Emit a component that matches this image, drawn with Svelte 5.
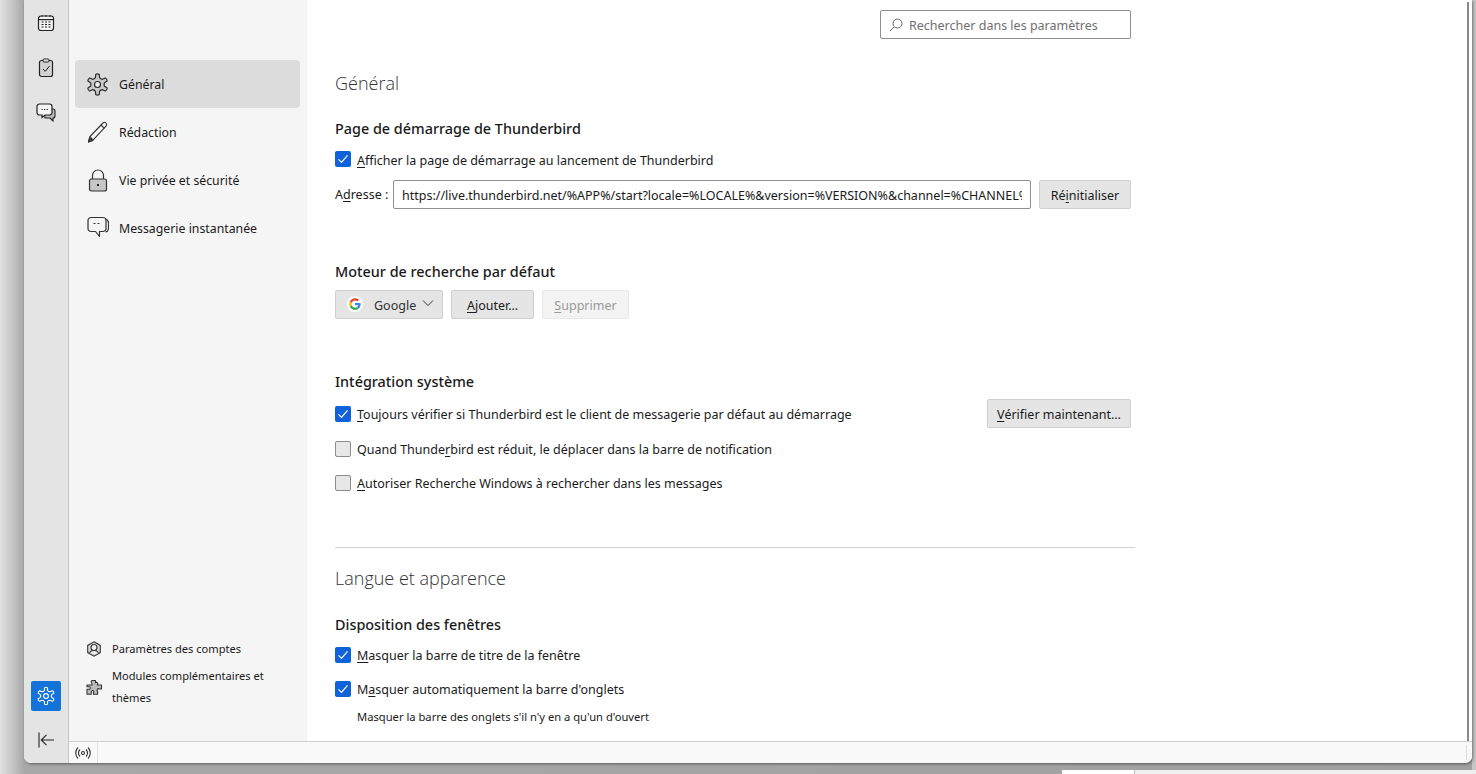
<script>
  const nav = [
    { label: 'Général', icon: 'gear', active: true },
    { label: 'Rédaction', icon: 'pen' },
    { label: 'Vie privée et sécurité', icon: 'lock' },
    { label: 'Messagerie instantanée', icon: 'chat' }
  ];

  // Six-lobed settings gear, as a smooth outline around the given centre.
  function gear(c, outer, inner, lobes = 6) {
    const pts = [];
    const step = (Math.PI * 2) / lobes;
    for (let i = 0; i < lobes; i++) {
      const a = -Math.PI / 2 + i * step;
      const w = step * 0.2;
      const p = (r, t) => `${(c + r * Math.cos(t)).toFixed(2)} ${(c + r * Math.sin(t)).toFixed(2)}`;
      pts.push(`${i === 0 ? 'M' : 'L'}${p(inner, a - w * 1.35)}`);
      pts.push(`L${p(outer, a - w * 0.85)}`);
      pts.push(`Q${p(outer + 1, a)} ${p(outer, a + w * 0.85)}`);
      pts.push(`L${p(inner, a + w * 1.35)}`);
      pts.push(`Q${p(inner - 1, a + step / 2)} ${p(inner, a + step - w * 1.35)}`);
    }
    return pts.join(' ') + 'Z';
  }
</script>

<div class="screen">
  <div class="window">
    <aside class="rail">
      <div class="rail-top">
        <span class="rail-btn">
          <svg viewBox="0 0 18 18" width="18" height="18"><rect x="1.500" y="2" width="15" height="14.500" rx="2.500" fill="#f4f4f4" stroke="#222" stroke-width="1.200"/><path d="M2 5.600h14" stroke="#222" stroke-width="1.200"/><path d="M5 1v2M9 1v2M13 1v2" stroke="#222"/><path d="M4.500 8h2M8 8h2M11.500 8h2M4.500 10.500h2M8 10.500h2M11.500 10.500h2M4.500 13h2M8 13h2M11.500 13h2" stroke="#222" stroke-width="1.200"/></svg>
        </span>
        <span class="rail-btn">
          <svg viewBox="0 0 18 20" width="18" height="20"><rect x="2.500" y="2.500" width="13" height="16" rx="2" fill="#d2d2d2" stroke="#222" stroke-width="1.200"/><rect x="6" y="1" width="6" height="3" rx="1" fill="#e8e8e8" stroke="#222"/><path d="M6 11l2.200 2.400L12.500 8" fill="none" stroke="#222"/></svg>
        </span>
        <span class="rail-btn">
          <svg viewBox="0 0 20 20" width="20" height="20"><path d="M8 7h9a2 2 0 0 1 2 2v5a2 2 0 0 1-2 2v3l-3-3H9z" fill="#bdbdbd" stroke="#222" stroke-width="1.100"/><path d="M3.500 2h10A2.500 2.500 0 0 1 16 4.500v6a2.500 2.500 0 0 1-2.500 2.500H9l-3 2.500V13H3.500A2.500 2.500 0 0 1 1 10.500v-6A2.500 2.500 0 0 1 3.500 2z" fill="#f6f6f6" stroke="#222" stroke-width="1.200"/><path d="M5.500 7.500h1.200M8 7.500h1.200M10.500 7.500h1.200" stroke="#222"/></svg>
        </span>
      </div>
      <div class="rail-bottom">
        <span class="settings-btn">
          <svg viewBox="0 0 20 20" width="20" height="20" fill="none" stroke="#fff" stroke-width="1.100" stroke-linejoin="round"><path d={gear(10, 8.300, 5.800)}/><circle cx="10" cy="10" r="2.400"/></svg>
        </span>
        <span class="collapse-btn">
          <svg viewBox="0 0 18 18" width="18" height="18" fill="none" stroke="#222" stroke-width="1.100"><path d="M2 1.500v15M17 9H4.500M9.500 3.800L4.300 9l5.200 5.200"/></svg>
        </span>
      </div>
    </aside>

    <div class="column">
      <div class="top">
        <nav class="side">
          <ul class="cats">
            {#each nav as item}
              <li class="cat" class:active={item.active}>
                <span class="cat-icon">
                  {#if item.icon === 'gear'}
                    <svg viewBox="0 0 24 24" width="24" height="24" stroke="#2b2b2b" stroke-width="1.200" stroke-linejoin="round"><path d={gear(12.500, 10.200, 7.200)} fill="#c9c9c9"/><circle cx="12.500" cy="12.500" r="3" fill="#efefef"/></svg>
                  {:else if item.icon === 'pen'}
                    <svg viewBox="0 0 24 24" width="24" height="24" stroke="#333" stroke-width="1.100" stroke-linejoin="round"><path d="M3.500 22l1.500-5.500L18 3a2 2 0 0 1 3 0 2.200 2.200 0 0 1 0 3L8 20.200z" fill="#f5f5f5"/><path d="M3.500 22l1.100-4.200L7.800 20.600z" fill="#444"/><path d="M16 5l3.300 3.300" fill="none"/><path d="M5 16.500l3 3.700" fill="none"/></svg>
                  {:else if item.icon === 'lock'}
                    <svg viewBox="0 0 24 24" width="24" height="24" stroke="#333" stroke-width="1.200"><path d="M7.500 11V7.500a5.500 5.500 0 0 1 11 0V11" fill="none"/><rect x="4.500" y="11" width="17" height="12" rx="2" fill="#c6c6c6"/><rect x="12" y="16" width="2" height="2" fill="#222" stroke="none"/></svg>
                  {:else}
                    <svg viewBox="0 0 24 24" width="24" height="24" stroke="#333" stroke-width="1.200" stroke-linejoin="round"><path d="M20.500 3c2 .5 3 2 3 4v5c0 2.200-1.200 3.700-3 4" fill="none"/><path d="M6 1.500h12a3 3 0 0 1 3 3v8a3 3 0 0 1-3 3h-3.500v5l-4-5H6a3 3 0 0 1-3-3v-8a3 3 0 0 1 3-3z" fill="#f5f5f5"/><path d="M8.500 7.500h2M12.500 7.500h2" stroke-width="1"/></svg>
                  {/if}
                </span>
                <span>{item.label}</span>
              </li>
            {/each}
          </ul>
          <ul class="links">
            <li class="link">
              <span class="link-icon">
                <svg viewBox="0 0 16 16" width="16" height="16" fill="none" stroke="#333" stroke-width="1.100"><path d="M8 .8l6.300 3.600v7.200L8 15.200l-6.300-3.600V4.400z" fill="#d8d8d8"/><circle cx="8" cy="6.500" r="3" fill="#f4f4f4"/><path d="M3.500 12.500c.5-2.500 2.500-3 4.500-3s4 .5 4.500 3" fill="#f4f4f4"/></svg>
              </span>
              <span>Paramètres des comptes</span>
            </li>
            <li class="link two">
              <span class="link-icon">
                <svg viewBox="0 0 17 17" width="17" height="17" stroke="#333" stroke-width="1.100" stroke-linejoin="round"><path d="M6 1.500h3.500v2.200c1.500-1 3 .3 1.800 2.300h4.200v4h-2.200c-1.500-1-3.200 1-1.700 2.500v2.800H7.500v-2c1-2-2-2.800-2.300 0v2H1v-5h1.700c1.800.5 2.500-2.500.2-2.600H1V6h5V4.500C4.800 3 5 2 6 1.500z" fill="#bdbdbd"/></svg>
              </span>
              <span>Modules complémentaires et thèmes</span>
            </li>
          </ul>
        </nav>

        <main class="main">
          <div class="content">
            <div class="search-row">
              <div class="search">
                <svg viewBox="0 0 14 14" width="14" height="14" fill="none" stroke="#666" stroke-width="1"><circle cx="8.500" cy="5.500" r="4.500"/><path d="M5.200 8.800L1 13"/></svg>
                <span class="search-text">Rechercher dans les paramètres</span>
              </div>
            </div>

            <h1 class="h1-general">Général</h1>

            <section class="sec-start">
              <h2>Page de démarrage de Thunderbird</h2>
              <label class="check on"><span class="box"><svg viewBox="0 0 16 16" width="16" height="16"><path d="M3.500 8.300l3 3 6-7" fill="none" stroke="#fff" stroke-width="1.200"/></svg></span><span class="lower"><u>A</u>fficher la page de démarrage au lancement de Thunderbird</span></label>
              <div class="addr">
                <span>A<u>d</u>resse :</span>
                <div class="input"><span class="input-text">https://live.thunderbird.net/%APP%/start?locale=%LOCALE%&amp;version=%VERSION%&amp;channel=%CHANNEL%</span></div>
                <button class="btn reset">Ré<u>i</u>nitialiser</button>
              </div>
            </section>

            <section class="sec-engine">
              <h2>Moteur de recherche par défaut</h2>
              <div class="btn-row">
                <button class="btn select">
                  <span class="g">
                    <svg viewBox="0 0 48 48" width="16" height="16"><circle cx="24" cy="24" r="24" fill="#fff"/><g transform="translate(6.500 6.500) scale(.73)"><path fill="#EA4335" d="M24 9.500c3.500 0 6.700 1.300 9.200 3.500l6.900-6.900C35.900 2.400 30.300 0 24 0 14.600 0 6.500 5.400 2.600 13.200l8 6.200C12.500 13.700 17.800 9.500 24 9.500z"/><path fill="#4285F4" d="M47 24.500c0-1.600-.1-3.100-.4-4.500H24v9h12.900c-.6 3-2.200 5.500-4.700 7.200l7.700 6C44.400 38 47 31.800 47 24.500z"/><path fill="#FBBC05" d="M10.600 28.600c-.5-1.400-.8-3-.8-4.600s.3-3.200.8-4.600l-8-6.200C.9 16.500 0 20.100 0 24s.9 7.500 2.600 10.800z"/><path fill="#34A853" d="M24 48c6.500 0 11.900-2.100 15.900-5.800l-7.700-6c-2.200 1.400-4.900 2.300-8.200 2.300-6.200 0-11.500-4.200-13.400-9.900l-8 6.200C6.500 42.600 14.600 48 24 48z"/></g></svg>
                  </span>
                  <span class="g-label">Google</span>
                  <svg class="chev" viewBox="0 0 12 8" width="12" height="8" fill="none" stroke="#333" stroke-width="1"><path d="M1 1.500l5 5 5-5"/></svg>
                </button>
                <button class="btn add"><u>A</u>jouter…</button>
                <button class="btn del"><u>S</u>upprimer</button>
              </div>
            </section>

            <section class="sec-system">
              <h2>Intégration système</h2>
              <div class="row-between">
                <label class="check on"><span class="box"><svg viewBox="0 0 16 16" width="16" height="16"><path d="M3.500 8.300l3 3 6-7" fill="none" stroke="#fff" stroke-width="1.200"/></svg></span><span class="lower"><u>T</u>oujours vérifier si Thunderbird est le client de messagerie par défaut au démarrage</span></label>
                <button class="btn verify"><u>V</u>érifier maintenant…</button>
              </div>
              <label class="check q"><span class="box"></span><span>Quand Thunde<u>r</u>bird est réduit, le déplacer dans la barre de notification</span></label>
              <label class="check s"><span class="box"></span><span><u>A</u>utoriser Recherche Windows à rechercher dans les messages</span></label>
            </section>

            <hr />

            <h1 class="h1-lang">Langue et apparence</h1>

            <section class="sec-layout">
              <h2>Disposition des fenêtres</h2>
              <label class="check on"><span class="box"><svg viewBox="0 0 16 16" width="16" height="16"><path d="M3.500 8.300l3 3 6-7" fill="none" stroke="#fff" stroke-width="1.200"/></svg></span><span><u>M</u>asquer la barre de titre de la fenêtre</span></label>
              <label class="check on t2"><span class="box"><svg viewBox="0 0 16 16" width="16" height="16"><path d="M3.500 8.300l3 3 6-7" fill="none" stroke="#fff" stroke-width="1.200"/></svg></span><span>M<u>a</u>squer automatiquement la barre d'onglets</span></label>
              <p class="note">Masquer la barre des onglets s'il n'y en a qu'un d'ouvert</p>
            </section>
          </div>
          <div class="scrollbar"></div>
        </main>
      </div>
      <footer class="status">
        <span class="signal">
          <svg viewBox="0 0 16 14" width="16" height="14" fill="none" stroke="#333" stroke-width="1.100"><circle cx="8" cy="7" r="1.500"/><path d="M5 3.500c-2 2-2 5 0 7M11 3.500c2 2 2 5 0 7M3 1.500c-3 3-3 8 0 11M13 1.500c3 3 3 8 0 11"/></svg>
        </span>
        <span class="status-fill"></span>
        <span class="grip"></span>
      </footer>
    </div>
  </div>
  <div class="under"><span class="under-white"></span><span class="under-gray"></span></div>
</div>

<style>
  :global(body) { margin: 0; background: #9c9c9c; overflow: hidden; }
  .screen {
    position: relative;
    width: 1476px;
    height: 774px;
    overflow: hidden;
    background: linear-gradient(90deg, #e0e0e0 0, #c6c6c6 12px, #a8a8a8 24px, #a0a0a0 1472px, #c6c6c6 1472px);
    font-family: "Noto Sans", "Open Sans", sans-serif;
    font-size: 12.500px;
    color: #1a1a1a;
  }
  .window {
    position: absolute;
    left: 24px;
    top: 0;
    width: 1448px;
    height: 763px;
    display: flex;
    background: #fff;
    border-radius: 0 0 7px 7px;
    overflow: hidden;
    box-shadow: 1px 1px 3px rgba(0,0,0,.45);
  }
  .column { flex: 1; min-width: 0; display: flex; flex-direction: column; }
  .top { flex: 1; display: flex; min-height: 0; }

  .rail {
    width: 45px;
    box-sizing: border-box;
    flex: none;
    background: #e4e4e4;
    border-right: 1px solid #c6c6c6;
    display: flex;
    flex-direction: column;
    justify-content: space-between;
    align-items: center;
  }
  .rail-top { display: flex; flex-direction: column; align-items: center; padding-top: 13px; }
  .rail-btn { display: flex; height: 20px; align-items: center; justify-content: center; margin-bottom: 24.500px; }
  .rail-bottom { display: flex; flex-direction: column; align-items: center; }
  .settings-btn {
    width: 30px; height: 30px; background: #1373d9; border-radius: 2px;
    display: flex; align-items: center; justify-content: center;
  }
  .collapse-btn { display: flex; height: 30px; margin-top: 14px; margin-bottom: 8px; align-items: center; }

  .side {
    width: 238px;
    flex: none;
    background: #f5f5f5;
    display: flex;
    flex-direction: column;
    justify-content: space-between;
    font-size: 12.300px;
  }
  .cats { list-style: none; margin: 60px 0 0; padding: 0 7px 0 6px; }
  .cat {
    height: 48px;
    display: flex;
    align-items: center;
    gap: 10px;
    padding-left: 10px;
    border-radius: 4px;
    color: #1a1a1a;
  }
  .cat-icon { width: 24px; height: 24px; display: flex; }
  .cat.active { background: #dcdcdc; }
  .links { list-style: none; margin: 0 0 32px; padding: 0 38px 0 17px; font-size: 11.100px; }
  .link { display: flex; align-items: center; gap: 9px; min-height: 22px; line-height: 22px; }
  .link.two { margin-top: 5px; }
  .link-icon { width: 17px; flex: none; display: flex; }

  .main { flex: 1; min-width: 0; position: relative; overflow: hidden; background: #fff; }
  .content { width: 800px; margin-left: 28px; position: relative; }
  .search-row { padding-top: 10px; width: 796px; display: flex; justify-content: flex-end; }
  .search {
    width: 251px; height: 29px; box-sizing: border-box;
    border: 1px solid #8f8f8f; border-radius: 2px;
    display: flex; align-items: center; gap: 6px; padding-left: 8px;
    color: #6f6f6f;
  }
  .search-text { padding-top: 2px; }
  h1 { font-weight: 300; font-size: 18px; line-height: 24px; margin: 0; color: #333; font-family: "Open Sans", "Noto Sans", sans-serif; }
  .h1-general { margin-top: 32px; }
  .h1-lang { margin-top: 18px; }
  h2 { font-weight: 500; font-size: 14.400px; line-height: 20px; margin: 0 0 -1px; padding-top: 1px; color: #1a1a1a; }
  .sec-start { margin-top: 23px; }
  .sec-engine { margin-top: 52px; }
  .sec-system { margin-top: 52px; }
  .sec-layout { margin-top: 24px; }
  .check { display: flex; align-items: center; gap: 6px; height: 20px; }
  .lower { padding-top: 2px; }
  .box {
    width: 16px; height: 16px; box-sizing: border-box; flex: none;
    border: 1px solid #8c8c8c; border-radius: 2px; background: #e7e7e7; display: block;
  }
  .check.on .box { background: #0f62d9; border: 0; }
  .box svg { display: block; }
  .sec-start .check { margin-top: 11px; }
  u { text-decoration-thickness: 1px; text-underline-offset: 2px; }
  .addr { display: flex; align-items: center; margin-top: 11px; width: 796px; }
  .addr > span:first-child { width: 58px; flex: none; }
  .input {
    width: 638px; height: 29px; box-sizing: border-box; flex: none;
    border: 1px solid #8f8f8f; border-radius: 2px;
    line-height: 29px; padding: 0 8px; background: #fff;
  }
  .input-text { display: block; height: 27px; white-space: nowrap; overflow: hidden; }
  .btn {
    height: 29px; box-sizing: border-box; font: inherit; color: #1a1a1a;
    background: #e5e5e5; border: 1px solid #cfcfcf; border-radius: 2px; padding: 2px 0 0;
  }
  .reset { width: 92px; margin-left: 8px; flex: none; }
  .btn-row { display: flex; gap: 8px; margin-top: 9px; }
  .select { width: 108px; display: flex; align-items: center; padding: 0 0 0 11px; }
  .g { width: 16px; height: 16px; display: flex; margin-top: -2px; }
  .g-label { margin-left: 11px; color: #333; padding-top: 2px; }
  .chev { margin-left: 6px; margin-top: -3px; }
  .add { width: 83px; }
  .del { width: 87px; background: #f3f3f3; border-color: #e8e8e8; color: #9a9a9a; }
  .row-between { display: flex; align-items: center; justify-content: space-between; width: 796px; height: 29px; margin-top: 8px; }
  .verify { width: 144px; }
  .check.q { margin-top: 11px; }
  .check.s { margin-top: 14px; }
  hr { width: 800px; border: 0; border-top: 1px solid #d0d0d0; margin: 54px 0 0; }
  .sec-layout .check { margin-top: 11px; }
  .sec-layout .check.t2 { margin-top: 14px; }
  .note { font-size: 11.200px; margin: 10px 0 0 22px; line-height: 16px; }
  .scrollbar { position: absolute; right: 3px; top: 2px; bottom: 0; width: 2px; background: #8a8a8a; }

  .status {
    height: 22px; flex: none; background: #f9f9f9; box-sizing: border-box;
    border-top: 1px solid #cfcfcf; display: flex; align-items: stretch;
  }
  .signal { width: 28px; border-right: 1px solid #e2e2e2; display: flex; align-items: center; justify-content: center; }
  .status-fill { flex: 1; }
  .grip { width: 5px; margin: 3px 0; border-left: 1px solid #dcdcdc; }
  .under { position: absolute; left: 1062px; top: 770px; height: 4px; right: 0; display: flex; }
  .under-white { width: 72px; background: #fff; border-right: 1px solid #bbb; }
  .under-gray { flex: 1; background: #efefef; }
</style>
